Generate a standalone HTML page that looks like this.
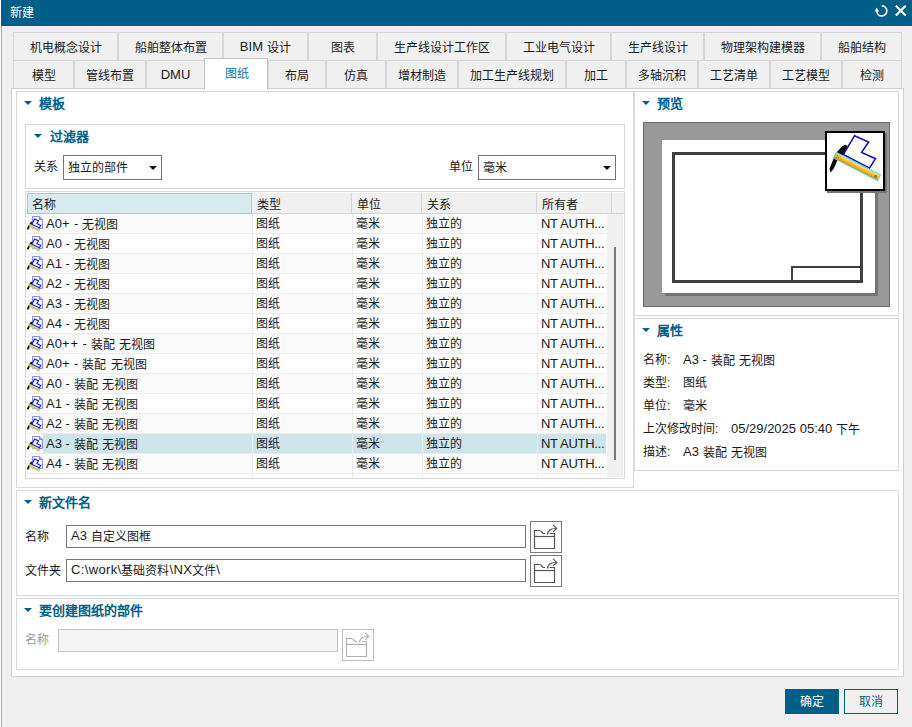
<!DOCTYPE html>
<html lang="zh-CN"><head><meta charset="utf-8"><title>新建</title>
<style>
*{box-sizing:border-box;margin:0;padding:0}
html,body{width:912px;height:727px;overflow:hidden;background:#f0f0f0}
body{font-family:"Liberation Sans",sans-serif;font-size:12px;color:#1a1a1a;position:relative;line-height:1;word-spacing:0.8px}
.abs{position:absolute}
#win{position:absolute;left:0;top:0;width:912px;height:727px;background:#f0f0f0}
#lb{position:absolute;left:1px;top:26px;width:1px;height:701px;background:#a9a9a9}
#title{position:absolute;left:1px;top:0;width:911px;height:26px;background:#005f87;color:#fff}
#title .t{position:absolute;left:9px;top:7px;font-size:12px}
.tab{position:absolute;height:29px;border:1px solid #d6d6d6;background:#f0f0f0;text-align:center;line-height:30px;font-size:12px;color:#1a1a1a;white-space:nowrap;margin-left:1px}
.tab.r1{top:32px}
.tab.r2{top:60px}
.tab.sel{top:58px;height:32px;background:#fff;border-color:#c4c4c4;border-bottom:none;color:#007aa9;line-height:30px;z-index:3;padding-left:2px}
#panel{position:absolute;left:11px;top:88px;width:893px;height:589px;background:#fff;border:1px solid #cfcfcf}
.grp{position:absolute;border:1px solid #d9d9d9;background:#fff}
.hd{position:absolute;font-weight:bold;color:#005f87;font-size:13px;white-space:nowrap}
.tri{position:absolute;width:0;height:0;border-left:4px solid transparent;border-right:4px solid transparent;border-top:4px solid #005f87}
.lbl{position:absolute;white-space:nowrap;font-size:12px}
.inp{position:absolute;border:1px solid #767676;background:#fff;height:25px;line-height:24px;padding-left:4px;white-space:nowrap;font-size:12px}
.dd{position:absolute;right:4px;top:10px;width:0;height:0;border-left:4px solid transparent;border-right:4px solid transparent;border-top:4px solid #111}
#tbl{position:absolute;left:25px;top:191px;width:600px;height:288px;border:1px solid #d9d9d9;background:#fff;overflow:hidden}
.th{position:absolute;top:1px;height:21px;line-height:24px;padding-left:5px;background:#f0f0f0;border-right:1px solid #d5d5d5;border-bottom:1px solid #d5d5d5;white-space:nowrap}
.tr{position:absolute;left:1px;width:579px;height:20px;line-height:19px;border-bottom:1px solid #ececec;white-space:nowrap;background:#fff}
.tr.alt{background:#fafafa}
.tr.sel{background:#cde4ea}
.tr>span{position:absolute;top:1px}
.ic{position:absolute;left:0;top:0}
.c0{left:19px}.c1{left:229px}.c2{left:329px}.c3{left:399px}.c4{left:514px}
.vl{position:absolute;top:22px;width:1px;height:266px;background:#ececec}
#sbt{position:absolute;left:581px;top:22px;width:16px;height:263px;background:#f0f0f0}
#sbh{position:absolute;left:588px;top:55px;width:2px;height:213px;background:#7a7a7a}
#pv{position:absolute;left:643px;top:122px;width:247px;height:185px;background:#999;border:1px solid #6a6a6a}
#pvsh{position:absolute;left:21px;top:20px;width:213px;height:153px;background:#747474}
#pvp{position:absolute;left:18px;top:17px;width:213px;height:153px;background:#fff}
#pvf{position:absolute;left:28px;top:29px;width:191px;height:131px;border:3px solid #3f3f3f;background:#fff}
#pvt{position:absolute;left:147px;top:143px;width:69px;height:14px;border-left:2px solid #3f3f3f;border-top:2px solid #3f3f3f;background:#fff}
#pvis{position:absolute;left:183px;top:10px;width:60px;height:60px;background:#767676}
#pvi{position:absolute;left:181px;top:8px}
.fb{position:absolute;width:32px;height:32px;border:1px solid #7a7a7a;background:#fff;padding:0}
.fb svg{display:block}
.btn{position:absolute;width:54px;height:25px;border:1px solid #005f87;background:#f0f0f0;color:#005f87;text-align:center;line-height:25px;font-size:12px}
.btn.ok{background:#005f87;color:#fff}
.l{word-spacing:0;font-size:13px;position:relative;top:-1px}
.th0{background:#d9ebf1;border:1px solid #b4c2c8;padding-left:4px;line-height:22px}
.tr.sel::before{content:'';position:absolute;left:0;top:0;width:16px;height:19px;background:#fff}
.c4 .l{letter-spacing:-0.3px}
.pth .l{letter-spacing:0.35px}
.pl{font-style:normal;letter-spacing:0.9px}
#lb0{position:absolute;left:0;top:0;width:1px;height:727px;background:#fff}
</style></head><body>
<div id="win">
<div id="title"><span class="t">新建</span>
<svg class="abs" style="left:873px;top:4px" width="34" height="14" viewBox="0 0 34 14"><path d="M7.8 1.9 A5 5 0 1 1 2.8 7.2" fill="none" stroke="#fff" stroke-width="1.7"/><path d="M0.8 7.6 L5.0 7.6 L2.7 3.6 Z" fill="#fff"/><path d="M21.9 1.7 L31.7 11.5 M31.7 1.7 L21.9 11.5" stroke="#fff" stroke-width="2.1" fill="none"/></svg>
</div><div id="lb0"></div><div id="lb"></div>
<div class="tab r1" style="left:12px;width:105px">机电概念设计</div>
<div class="tab r1" style="left:117px;width:105px">船舶整体布置</div>
<div class="tab r1" style="left:222px;width:85px"><span class="l">BIM</span> 设计</div>
<div class="tab r1" style="left:307px;width:69px">图表</div>
<div class="tab r1" style="left:376px;width:129px">生产线设计工作区</div>
<div class="tab r1" style="left:505px;width:105px">工业电气设计</div>
<div class="tab r1" style="left:610px;width:93px">生产线设计</div>
<div class="tab r1" style="left:703px;width:117px">物理架构建模器</div>
<div class="tab r1" style="left:820px;width:81px">船舶结构</div>
<div class="tab r2" style="left:12px;width:61px">模型</div>
<div class="tab r2" style="left:73px;width:72px">管线布置</div>
<div class="tab r2" style="left:145px;width:59px"><span class="l">DMU</span></div>
<div class="tab sel" style="left:203px;width:64px">图纸</div>
<div class="tab r2" style="left:267px;width:58px">布局</div>
<div class="tab r2" style="left:325px;width:60px">仿真</div>
<div class="tab r2" style="left:385px;width:72px">增材制造</div>
<div class="tab r2" style="left:457px;width:108px">加工生产线规划</div>
<div class="tab r2" style="left:565px;width:60px">加工</div>
<div class="tab r2" style="left:625px;width:72px">多轴沉积</div>
<div class="tab r2" style="left:697px;width:72px">工艺清单</div>
<div class="tab r2" style="left:769px;width:72px">工艺模型</div>
<div class="tab r2" style="left:841px;width:60px">检测</div>
<div id="panel"></div>
<div class="grp" style="left:16px;top:91px;width:618px;height:397px"></div>
<div class="tri" style="left:24px;top:101px"></div><div class="hd" style="left:39px;top:97px">模板</div>
<div class="grp" style="left:25px;top:124px;width:600px;height:65px"></div>
<div class="tri" style="left:34px;top:134px"></div><div class="hd" style="left:50px;top:130px">过滤器</div>
<div class="lbl" style="left:34px;top:161px">关系</div>
<div class="inp" style="left:63px;top:155px;width:99px">独立的部件<i class="dd"></i></div>
<div class="lbl" style="left:449px;top:161px">单位</div>
<div class="inp" style="left:478px;top:155px;width:138px">毫米<i class="dd"></i></div>
<div id="tbl">
<div class="th th0" style="left:1px;width:225px">名称</div>
<div class="th" style="left:226px;width:100px">类型</div>
<div class="th" style="left:326px;width:70px">单位</div>
<div class="th" style="left:396px;width:115px">关系</div>
<div class="th" style="left:511px;width:75px">所有者</div>
<div class="th" style="left:586px;width:12px;border-right:none"></div>
<div class="tr alt" style="top:22px"><svg class="ic" width="18" height="18" viewBox="0 0 18 18"><path d="M5.5 2.5 H12.6 L15.5 5.4 V14.5 H5.5 Z" fill="#fff" stroke="#7c7cf0" stroke-width="0.9"/><path d="M12.5 2.8 V5.5 H15.2" fill="#9ab4f4" stroke="#7272ee" stroke-width="0.9"/><path d="M7.6 5.1 L11.5 6.7 L9.9 9.6 L13.8 11.5 L12.3 13.8 L4.8 10.2 Z" fill="#fff" stroke="#1a1af6" stroke-width="1.15"/><path d="M4.9 8.2 L2.6 11.2 L0.6 15.4" fill="none" stroke="#0a0a0a" stroke-width="1.9"/><path d="M2 10.9 L12.8 16.6" stroke="#9fe0e8" stroke-width="2.4"/><path d="M2 10.9 L12.8 16.6" stroke="#eec028" stroke-width="1.6"/></svg><span class="c0"><span class="l">A0<i class="pl">+</i> -</span> 无视图</span><span class="c1">图纸</span><span class="c2">毫米</span><span class="c3">独立的</span><span class="c4"><span class="l">NT AUTH...</span></span></div>
<div class="tr" style="top:42px"><svg class="ic" width="18" height="18" viewBox="0 0 18 18"><path d="M5.5 2.5 H12.6 L15.5 5.4 V14.5 H5.5 Z" fill="#fff" stroke="#7c7cf0" stroke-width="0.9"/><path d="M12.5 2.8 V5.5 H15.2" fill="#9ab4f4" stroke="#7272ee" stroke-width="0.9"/><path d="M7.6 5.1 L11.5 6.7 L9.9 9.6 L13.8 11.5 L12.3 13.8 L4.8 10.2 Z" fill="#fff" stroke="#1a1af6" stroke-width="1.15"/><path d="M4.9 8.2 L2.6 11.2 L0.6 15.4" fill="none" stroke="#0a0a0a" stroke-width="1.9"/><path d="M2 10.9 L12.8 16.6" stroke="#9fe0e8" stroke-width="2.4"/><path d="M2 10.9 L12.8 16.6" stroke="#eec028" stroke-width="1.6"/></svg><span class="c0"><span class="l">A0 -</span> 无视图</span><span class="c1">图纸</span><span class="c2">毫米</span><span class="c3">独立的</span><span class="c4"><span class="l">NT AUTH...</span></span></div>
<div class="tr alt" style="top:62px"><svg class="ic" width="18" height="18" viewBox="0 0 18 18"><path d="M5.5 2.5 H12.6 L15.5 5.4 V14.5 H5.5 Z" fill="#fff" stroke="#7c7cf0" stroke-width="0.9"/><path d="M12.5 2.8 V5.5 H15.2" fill="#9ab4f4" stroke="#7272ee" stroke-width="0.9"/><path d="M7.6 5.1 L11.5 6.7 L9.9 9.6 L13.8 11.5 L12.3 13.8 L4.8 10.2 Z" fill="#fff" stroke="#1a1af6" stroke-width="1.15"/><path d="M4.9 8.2 L2.6 11.2 L0.6 15.4" fill="none" stroke="#0a0a0a" stroke-width="1.9"/><path d="M2 10.9 L12.8 16.6" stroke="#9fe0e8" stroke-width="2.4"/><path d="M2 10.9 L12.8 16.6" stroke="#eec028" stroke-width="1.6"/></svg><span class="c0"><span class="l">A1 -</span> 无视图</span><span class="c1">图纸</span><span class="c2">毫米</span><span class="c3">独立的</span><span class="c4"><span class="l">NT AUTH...</span></span></div>
<div class="tr" style="top:82px"><svg class="ic" width="18" height="18" viewBox="0 0 18 18"><path d="M5.5 2.5 H12.6 L15.5 5.4 V14.5 H5.5 Z" fill="#fff" stroke="#7c7cf0" stroke-width="0.9"/><path d="M12.5 2.8 V5.5 H15.2" fill="#9ab4f4" stroke="#7272ee" stroke-width="0.9"/><path d="M7.6 5.1 L11.5 6.7 L9.9 9.6 L13.8 11.5 L12.3 13.8 L4.8 10.2 Z" fill="#fff" stroke="#1a1af6" stroke-width="1.15"/><path d="M4.9 8.2 L2.6 11.2 L0.6 15.4" fill="none" stroke="#0a0a0a" stroke-width="1.9"/><path d="M2 10.9 L12.8 16.6" stroke="#9fe0e8" stroke-width="2.4"/><path d="M2 10.9 L12.8 16.6" stroke="#eec028" stroke-width="1.6"/></svg><span class="c0"><span class="l">A2 -</span> 无视图</span><span class="c1">图纸</span><span class="c2">毫米</span><span class="c3">独立的</span><span class="c4"><span class="l">NT AUTH...</span></span></div>
<div class="tr alt" style="top:102px"><svg class="ic" width="18" height="18" viewBox="0 0 18 18"><path d="M5.5 2.5 H12.6 L15.5 5.4 V14.5 H5.5 Z" fill="#fff" stroke="#7c7cf0" stroke-width="0.9"/><path d="M12.5 2.8 V5.5 H15.2" fill="#9ab4f4" stroke="#7272ee" stroke-width="0.9"/><path d="M7.6 5.1 L11.5 6.7 L9.9 9.6 L13.8 11.5 L12.3 13.8 L4.8 10.2 Z" fill="#fff" stroke="#1a1af6" stroke-width="1.15"/><path d="M4.9 8.2 L2.6 11.2 L0.6 15.4" fill="none" stroke="#0a0a0a" stroke-width="1.9"/><path d="M2 10.9 L12.8 16.6" stroke="#9fe0e8" stroke-width="2.4"/><path d="M2 10.9 L12.8 16.6" stroke="#eec028" stroke-width="1.6"/></svg><span class="c0"><span class="l">A3 -</span> 无视图</span><span class="c1">图纸</span><span class="c2">毫米</span><span class="c3">独立的</span><span class="c4"><span class="l">NT AUTH...</span></span></div>
<div class="tr" style="top:122px"><svg class="ic" width="18" height="18" viewBox="0 0 18 18"><path d="M5.5 2.5 H12.6 L15.5 5.4 V14.5 H5.5 Z" fill="#fff" stroke="#7c7cf0" stroke-width="0.9"/><path d="M12.5 2.8 V5.5 H15.2" fill="#9ab4f4" stroke="#7272ee" stroke-width="0.9"/><path d="M7.6 5.1 L11.5 6.7 L9.9 9.6 L13.8 11.5 L12.3 13.8 L4.8 10.2 Z" fill="#fff" stroke="#1a1af6" stroke-width="1.15"/><path d="M4.9 8.2 L2.6 11.2 L0.6 15.4" fill="none" stroke="#0a0a0a" stroke-width="1.9"/><path d="M2 10.9 L12.8 16.6" stroke="#9fe0e8" stroke-width="2.4"/><path d="M2 10.9 L12.8 16.6" stroke="#eec028" stroke-width="1.6"/></svg><span class="c0"><span class="l">A4 -</span> 无视图</span><span class="c1">图纸</span><span class="c2">毫米</span><span class="c3">独立的</span><span class="c4"><span class="l">NT AUTH...</span></span></div>
<div class="tr alt" style="top:142px"><svg class="ic" width="18" height="18" viewBox="0 0 18 18"><path d="M5.5 2.5 H12.6 L15.5 5.4 V14.5 H5.5 Z" fill="#fff" stroke="#7c7cf0" stroke-width="0.9"/><path d="M12.5 2.8 V5.5 H15.2" fill="#9ab4f4" stroke="#7272ee" stroke-width="0.9"/><path d="M7.6 5.1 L11.5 6.7 L9.9 9.6 L13.8 11.5 L12.3 13.8 L4.8 10.2 Z" fill="#fff" stroke="#1a1af6" stroke-width="1.15"/><path d="M4.9 8.2 L2.6 11.2 L0.6 15.4" fill="none" stroke="#0a0a0a" stroke-width="1.9"/><path d="M2 10.9 L12.8 16.6" stroke="#9fe0e8" stroke-width="2.4"/><path d="M2 10.9 L12.8 16.6" stroke="#eec028" stroke-width="1.6"/></svg><span class="c0"><span class="l">A0<i class="pl">+</i><i class="pl">+</i> -</span> 装配 无视图</span><span class="c1">图纸</span><span class="c2">毫米</span><span class="c3">独立的</span><span class="c4"><span class="l">NT AUTH...</span></span></div>
<div class="tr" style="top:162px"><svg class="ic" width="18" height="18" viewBox="0 0 18 18"><path d="M5.5 2.5 H12.6 L15.5 5.4 V14.5 H5.5 Z" fill="#fff" stroke="#7c7cf0" stroke-width="0.9"/><path d="M12.5 2.8 V5.5 H15.2" fill="#9ab4f4" stroke="#7272ee" stroke-width="0.9"/><path d="M7.6 5.1 L11.5 6.7 L9.9 9.6 L13.8 11.5 L12.3 13.8 L4.8 10.2 Z" fill="#fff" stroke="#1a1af6" stroke-width="1.15"/><path d="M4.9 8.2 L2.6 11.2 L0.6 15.4" fill="none" stroke="#0a0a0a" stroke-width="1.9"/><path d="M2 10.9 L12.8 16.6" stroke="#9fe0e8" stroke-width="2.4"/><path d="M2 10.9 L12.8 16.6" stroke="#eec028" stroke-width="1.6"/></svg><span class="c0"><span class="l">A0<i class="pl">+</i> -</span> 装配 无视图</span><span class="c1">图纸</span><span class="c2">毫米</span><span class="c3">独立的</span><span class="c4"><span class="l">NT AUTH...</span></span></div>
<div class="tr alt" style="top:182px"><svg class="ic" width="18" height="18" viewBox="0 0 18 18"><path d="M5.5 2.5 H12.6 L15.5 5.4 V14.5 H5.5 Z" fill="#fff" stroke="#7c7cf0" stroke-width="0.9"/><path d="M12.5 2.8 V5.5 H15.2" fill="#9ab4f4" stroke="#7272ee" stroke-width="0.9"/><path d="M7.6 5.1 L11.5 6.7 L9.9 9.6 L13.8 11.5 L12.3 13.8 L4.8 10.2 Z" fill="#fff" stroke="#1a1af6" stroke-width="1.15"/><path d="M4.9 8.2 L2.6 11.2 L0.6 15.4" fill="none" stroke="#0a0a0a" stroke-width="1.9"/><path d="M2 10.9 L12.8 16.6" stroke="#9fe0e8" stroke-width="2.4"/><path d="M2 10.9 L12.8 16.6" stroke="#eec028" stroke-width="1.6"/></svg><span class="c0"><span class="l">A0 -</span> 装配 无视图</span><span class="c1">图纸</span><span class="c2">毫米</span><span class="c3">独立的</span><span class="c4"><span class="l">NT AUTH...</span></span></div>
<div class="tr" style="top:202px"><svg class="ic" width="18" height="18" viewBox="0 0 18 18"><path d="M5.5 2.5 H12.6 L15.5 5.4 V14.5 H5.5 Z" fill="#fff" stroke="#7c7cf0" stroke-width="0.9"/><path d="M12.5 2.8 V5.5 H15.2" fill="#9ab4f4" stroke="#7272ee" stroke-width="0.9"/><path d="M7.6 5.1 L11.5 6.7 L9.9 9.6 L13.8 11.5 L12.3 13.8 L4.8 10.2 Z" fill="#fff" stroke="#1a1af6" stroke-width="1.15"/><path d="M4.9 8.2 L2.6 11.2 L0.6 15.4" fill="none" stroke="#0a0a0a" stroke-width="1.9"/><path d="M2 10.9 L12.8 16.6" stroke="#9fe0e8" stroke-width="2.4"/><path d="M2 10.9 L12.8 16.6" stroke="#eec028" stroke-width="1.6"/></svg><span class="c0"><span class="l">A1 -</span> 装配 无视图</span><span class="c1">图纸</span><span class="c2">毫米</span><span class="c3">独立的</span><span class="c4"><span class="l">NT AUTH...</span></span></div>
<div class="tr alt" style="top:222px"><svg class="ic" width="18" height="18" viewBox="0 0 18 18"><path d="M5.5 2.5 H12.6 L15.5 5.4 V14.5 H5.5 Z" fill="#fff" stroke="#7c7cf0" stroke-width="0.9"/><path d="M12.5 2.8 V5.5 H15.2" fill="#9ab4f4" stroke="#7272ee" stroke-width="0.9"/><path d="M7.6 5.1 L11.5 6.7 L9.9 9.6 L13.8 11.5 L12.3 13.8 L4.8 10.2 Z" fill="#fff" stroke="#1a1af6" stroke-width="1.15"/><path d="M4.9 8.2 L2.6 11.2 L0.6 15.4" fill="none" stroke="#0a0a0a" stroke-width="1.9"/><path d="M2 10.9 L12.8 16.6" stroke="#9fe0e8" stroke-width="2.4"/><path d="M2 10.9 L12.8 16.6" stroke="#eec028" stroke-width="1.6"/></svg><span class="c0"><span class="l">A2 -</span> 装配 无视图</span><span class="c1">图纸</span><span class="c2">毫米</span><span class="c3">独立的</span><span class="c4"><span class="l">NT AUTH...</span></span></div>
<div class="tr sel" style="top:242px"><svg class="ic" width="18" height="18" viewBox="0 0 18 18"><path d="M5.5 2.5 H12.6 L15.5 5.4 V14.5 H5.5 Z" fill="#fff" stroke="#7c7cf0" stroke-width="0.9"/><path d="M12.5 2.8 V5.5 H15.2" fill="#9ab4f4" stroke="#7272ee" stroke-width="0.9"/><path d="M7.6 5.1 L11.5 6.7 L9.9 9.6 L13.8 11.5 L12.3 13.8 L4.8 10.2 Z" fill="#fff" stroke="#1a1af6" stroke-width="1.15"/><path d="M4.9 8.2 L2.6 11.2 L0.6 15.4" fill="none" stroke="#0a0a0a" stroke-width="1.9"/><path d="M2 10.9 L12.8 16.6" stroke="#9fe0e8" stroke-width="2.4"/><path d="M2 10.9 L12.8 16.6" stroke="#eec028" stroke-width="1.6"/></svg><span class="c0"><span class="l">A3 -</span> 装配 无视图</span><span class="c1">图纸</span><span class="c2">毫米</span><span class="c3">独立的</span><span class="c4"><span class="l">NT AUTH...</span></span></div>
<div class="tr alt" style="top:262px"><svg class="ic" width="18" height="18" viewBox="0 0 18 18"><path d="M5.5 2.5 H12.6 L15.5 5.4 V14.5 H5.5 Z" fill="#fff" stroke="#7c7cf0" stroke-width="0.9"/><path d="M12.5 2.8 V5.5 H15.2" fill="#9ab4f4" stroke="#7272ee" stroke-width="0.9"/><path d="M7.6 5.1 L11.5 6.7 L9.9 9.6 L13.8 11.5 L12.3 13.8 L4.8 10.2 Z" fill="#fff" stroke="#1a1af6" stroke-width="1.15"/><path d="M4.9 8.2 L2.6 11.2 L0.6 15.4" fill="none" stroke="#0a0a0a" stroke-width="1.9"/><path d="M2 10.9 L12.8 16.6" stroke="#9fe0e8" stroke-width="2.4"/><path d="M2 10.9 L12.8 16.6" stroke="#eec028" stroke-width="1.6"/></svg><span class="c0"><span class="l">A4 -</span> 装配 无视图</span><span class="c1">图纸</span><span class="c2">毫米</span><span class="c3">独立的</span><span class="c4"><span class="l">NT AUTH...</span></span></div>
<div class="tr last" style="top:282px;height:6px"></div>
<div class="vl" style="left:226px"></div><div class="vl" style="left:326px"></div><div class="vl" style="left:396px"></div><div class="vl" style="left:511px"></div>
<div id="sbt"></div><div id="sbh"></div>
</div>
<div class="grp" style="left:634px;top:91px;width:265px;height:225px"></div>
<div class="tri" style="left:642px;top:101px"></div><div class="hd" style="left:657px;top:97px">预览</div>
<div id="pv"><div id="pvsh"></div><div id="pvp"></div><div id="pvf"></div><div id="pvt"></div>
<div id="pvis"></div><svg id="pvi" width="60" height="60" viewBox="0 0 60 60"><defs><linearGradient id="rg" x1="0" y1="0" x2="0" y2="1"><stop offset="0" stop-color="#f8ec74"/><stop offset="0.5" stop-color="#f0bc30"/><stop offset="1" stop-color="#e49414"/></linearGradient></defs>
<rect x="1" y="1" width="58" height="58" fill="#fff" stroke="#000" stroke-width="2"/>
<path d="M22.6 15 C20.6 13.2 18 14.2 16 16.4 L10.6 22.4 L7.4 30.5 L4.4 38 L5.6 41.6 L8.8 37.4 L12.4 29.6 L18.6 23.4 Z" fill="#0a0a0a"/>
<path d="M29.6 4.7 L43.6 11 L36.6 21.4 L50.5 27.7 L44.5 37.1 L18.3 23.5 Z" fill="#fff" stroke="#0808c8" stroke-width="1.5" stroke-linejoin="miter"/>
<g transform="translate(9.65 24.05) rotate(27.2)"><rect x="0" y="-3.65" width="50.3" height="7.3" fill="#38d4ee"/><rect x="0.8" y="-2.85" width="48.7" height="5.7" fill="url(#rg)"/><circle cx="46.2" cy="0.2" r="1.25" fill="#6a5410"/><circle cx="46.2" cy="0.2" r="0.5" fill="#d8b040"/><circle cx="2.6" cy="-1" r="0.6" fill="#7a5a08"/><circle cx="4.6" cy="0.6" r="0.6" fill="#7a5a08"/><circle cx="2.4" cy="1.4" r="0.6" fill="#7a5a08"/><circle cx="5.4" cy="-1.4" r="0.5" fill="#7a5a08"/></g>
</svg></div>
<div class="grp" style="left:634px;top:318px;width:265px;height:153px"></div>
<div class="tri" style="left:642px;top:328px"></div><div class="hd" style="left:657px;top:324px">属性</div>
<div class="lbl" style="left:643px;top:354px">名称:</div>
<div class="lbl" style="left:683px;top:354px"><span class="l">A3 -</span> 装配 无视图</div>
<div class="lbl" style="left:643px;top:377px">类型:</div>
<div class="lbl" style="left:683px;top:377px">图纸</div>
<div class="lbl" style="left:643px;top:400px">单位:</div>
<div class="lbl" style="left:683px;top:400px">毫米</div>
<div class="lbl" style="left:643px;top:423px">上次修改时间:</div>
<div class="lbl" style="left:731px;top:423px"><span class="l">05/29/2025 05:40</span> 下午</div>
<div class="lbl" style="left:643px;top:446px">描述:</div>
<div class="lbl" style="left:683px;top:446px"><span class="l">A3</span> 装配 无视图</div>
<div class="grp" style="left:16px;top:490px;width:883px;height:106px"></div>
<div class="tri" style="left:24px;top:500px"></div><div class="hd" style="left:39px;top:496px">新文件名</div>
<div class="lbl" style="left:25px;top:531px">名称</div>
<div class="inp" style="left:66px;top:525px;width:460px;height:23px;line-height:22px"><span class="l">A3</span> 自定义图框</div>
<div class="fb" style="left:530px;top:521px"><svg width="30" height="30" viewBox="1 1 30 30" fill="none" stroke="#555" stroke-width="1.2"><path d="M4.5 27.5 V9.5 H10 C11.6 9.5 11.8 12.5 13.6 12.5 H15"/><path d="M4.5 15.5 H24.5"/><path d="M19.8 12.5 H24.5 V27.5 H4.5"/><path d="M17.6 13.6 C17.6 9.6 20.4 7.5 26 7.5"/><path d="M23.1 3.9 L26.7 7.4 L23.1 10.9"/></svg></div>
<div class="lbl" style="left:25px;top:565px">文件夹</div>
<div class="inp" style="left:66px;top:559px;width:460px;height:23px;line-height:22px"><span class="pth"><span class="l">C:&#92;work&#92;</span>基础资料<span class="l">&#92;NX</span>文件<span class="l">&#92;</span></span></div>
<div class="fb" style="left:530px;top:555px"><svg width="30" height="30" viewBox="1 1 30 30" fill="none" stroke="#555" stroke-width="1.2"><path d="M4.5 27.5 V9.5 H10 C11.6 9.5 11.8 12.5 13.6 12.5 H15"/><path d="M4.5 15.5 H24.5"/><path d="M19.8 12.5 H24.5 V27.5 H4.5"/><path d="M17.6 13.6 C17.6 9.6 20.4 7.5 26 7.5"/><path d="M23.1 3.9 L26.7 7.4 L23.1 10.9"/></svg></div>
<div class="grp" style="left:16px;top:598px;width:883px;height:72px"></div>
<div class="tri" style="left:24px;top:608px"></div><div class="hd" style="left:39px;top:604px">要创建图纸的部件</div>
<div class="lbl" style="left:25px;top:634px;color:#9a9a9a">名称</div>
<div class="inp" style="left:58px;top:629px;width:280px;height:23px;background:#f5f5f5;border-color:#c2c2c2"></div>
<div class="fb" style="left:342px;top:629px;border-color:#bdbdbd"><svg width="30" height="30" viewBox="1 1 30 30" fill="none" stroke="#b0b0b0" stroke-width="1.2"><path d="M4.5 27.5 V9.5 H10 C11.6 9.5 11.8 12.5 13.6 12.5 H15"/><path d="M4.5 15.5 H24.5"/><path d="M19.8 12.5 H24.5 V27.5 H4.5"/><path d="M17.6 13.6 C17.6 9.6 20.4 7.5 26 7.5"/><path d="M23.1 3.9 L26.7 7.4 L23.1 10.9"/></svg></div>
<div class="btn ok" style="left:785px;top:689px">确定</div>
<div class="btn" style="left:844px;top:689px">取消</div>
</div>
</body></html>
